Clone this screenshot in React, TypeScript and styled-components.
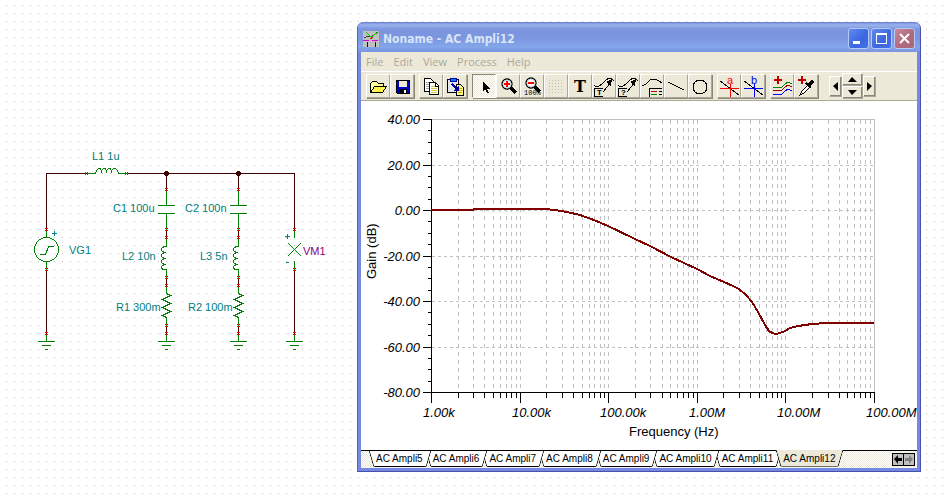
import React from "react";
import styled, { createGlobalStyle, css } from "styled-components";

const FACE = "#ece9d8";
const SHADOW = "#aca899";
const WIRE = "#400000";
const PART = "#008000";
const LABEL = "#008080";

const GlobalStyle = createGlobalStyle`
  * { box-sizing: border-box; }
  html { height: 100%; }
  body { margin: 0; min-height: 100%; font-family: "Liberation Sans", Arial, sans-serif; font-size: 11px; }
  button { margin: 0; padding: 0; border: 0; background: none; font: inherit; color: inherit; }
`;

const Page = styled.main`
  min-height: 100vh;
  display: flex;
  align-items: flex-start;
  padding: 22px 27px 26px 0;
  background-image: linear-gradient(to right, transparent 1px, #fff 1px),
    linear-gradient(to bottom, #c0c0c0 1px, #fff 1px);
  background-size: 8px 8px;
  background-position: 6px 5px;
`;

const Schematic = styled.figure`
  flex: none;
  width: 357px;
  margin: 0;
  padding-top: 120px;
`;

const Drawing = styled.svg`
  display: block;
  width: 100%;
  height: auto;
  text { font-family: "Liberation Sans", Arial, sans-serif; }
`;

const Window = styled.section`
  flex: 1;
  min-width: 0;
  padding: 0 4px 4px;
  border-radius: 7px 7px 0 0;
  background: #758adf;
  box-shadow: inset 1px 0 #5a60c4, inset -1px -1px #4a4fb5, inset 0 1px #5f73c8;
`;

const TitleBar = styled.header`
  display: flex;
  align-items: center;
  gap: 4px;
  height: 30px;
  margin: 0 -3px;
  padding: 3px 5px 0;
  border-radius: 6px 6px 0 0;
  background: linear-gradient(#6a80d0 0, #9bb4ee 3px, #7b96df 7px, #7b96df 16px, #84a6ea 25px, #7a94dd 30px);
`;

const Title = styled.h1`
  flex: 1;
  margin: 0;
  color: #d8e4f8;
  font: bold 12px/18px "DejaVu Sans Condensed", "Noto Sans", sans-serif;
`;

const CaptionGroup = styled.div`
  display: flex;
  gap: 2px;
`;

const Caption = styled.button<{ $close?: boolean }>`
  width: 21px;
  height: 21px;
  border: 1px solid #b6c8f4;
  border-radius: 3px;
  background: ${(p) =>
    p.$close
      ? "linear-gradient(135deg, #c68a9c, #b0697c 60%, #a9687c)"
      : "linear-gradient(135deg, #5f8af0, #3a66e0 60%, #4573e6)"};
  svg { display: block; width: 19px; height: 19px; }
`;

const MenuBar = styled.nav`
  display: flex;
  gap: 10px;
  height: 19px;
  padding: 0 5px;
  background: ${FACE};
  color: ${SHADOW};
  font: 11px/18px "Open Sans", "Noto Sans", sans-serif;
`;

const ToolBar = styled.div`
  display: flex;
  align-items: center;
  gap: 5px;
  height: 30px;
  padding: 0 5px;
  border-top: 1px solid #fff;
  border-bottom: 1px solid ${SHADOW};
  background: ${FACE};
`;

const ToolGroup = styled.div`
  display: flex;
  box-shadow: 1px 1px #8b887a;
`;

const raised = css`
  border: 1px solid;
  border-color: #fff ${SHADOW} ${SHADOW} #fff;
  background: ${FACE};
`;

const Tool = styled.button<{ $pressed?: boolean }>`
  ${raised}
  width: 24px;
  height: 24px;
  ${(p) =>
    p.$pressed &&
    css`
      border-color: #8b887a #fff #fff #8b887a;
      background: repeating-conic-gradient(#fff 0 25%, ${FACE} 0 50%) 0 0 / 2px 2px;
    `}
  svg { display: block; width: 22px; height: 22px; overflow: visible; }
`;

const Spinner = styled.div`
  display: grid;
  grid-template: "left up right" 13px "left down right" 13px / 13px 21px 13px;
  align-items: center;
  margin-left: 6px;
`;

const Arrow = styled.button<{ $area: "left" | "right" | "up" | "down" }>`
  ${raised}
  grid-area: ${(p) => p.$area};
  display: grid;
  place-items: center;
  height: ${(p) => (p.$area === "left" || p.$area === "right" ? "21px" : "13px")};
  box-shadow: inset -1px -1px #8b887a;
`;

const Plot = styled(Drawing)`
  background: #fff;
`;

const TabStrip = styled.footer`
  display: flex;
  height: 18px;
  padding: 0 2px 0 8px;
  border-top: 1px solid #000;
  background: repeating-conic-gradient(#fff 0 25%, ${FACE} 0 50%) 0 0 / 2px 2px;
`;

const Tabs = styled.div`
  flex: 1;
  display: flex;
  isolation: isolate;
`;

const Tab = styled.button<{ $active?: boolean; $order: number }>`
  position: relative;
  z-index: ${(p) => (p.$active ? 20 : p.$order)};
  height: 16px;
  padding: 0 8px 0 7px;
  margin-right: -5px;
  font-size: 10px;
  line-height: 16px;
  white-space: nowrap;
  &::before,
  &::after {
    content: "";
    position: absolute;
    z-index: -1;
    top: ${(p) => (p.$active ? "-1px" : "0")};
    bottom: 0;
    background: ${(p) => (p.$active ? FACE : "#fff")};
    border-bottom: 1px solid ${(p) => (p.$active ? "#716f64" : "#000")};
  }
  &::before {
    left: 2px;
    right: 40%;
    border-left: 1px solid #000;
    border-bottom-left-radius: 2px;
    transform: skewX(16deg);
  }
  &::after {
    left: 40%;
    right: 2px;
    border-right: 1px solid #000;
    border-bottom-right-radius: 2px;
    transform: skewX(-16deg);
  }
`;

const Nudge = styled.button`
  width: 12px;
  height: 13px;
  margin-top: 2px;
  border: 1px solid #000;
  background: #c0c0c0;
  & + & { margin-left: -1px; }
  svg { display: block; width: 10px; height: 11px; }
`;

/* ---------- circuit ---------- */

const Pin = ({ x, y, flat }: { x: number; y: number; flat?: boolean }) =>
  flat ? (
    <path fill="#f00" d={`M${x - 1} ${y - 1}h1v3h-1zM${x + 1} ${y - 1}h1v3h-1z`} />
  ) : (
    <path fill="#f00" d={`M${x - 1} ${y - 1}h3v1h-3zM${x - 1} ${y + 1}h3v1h-3z`} />
  );

const Line = ({ d, c = PART }: { d: string; c?: string }) => (
  <path d={d} fill="none" stroke={c} strokeLinecap="square" transform="translate(.5 .5)" />
);

const Ground = ({ x }: { x: number }) => (
  <Line d={`M${x} 334V341M${x - 8} 341h16M${x - 4} 345h8M${x - 1} 349h2`} />
);

const Branch = ({ x }: { x: number }) => (
  <g>
    <Line c={WIRE} d={`M${x} 173V189M${x} 229V238M${x} 277V286M${x} 325V334`} />
    <Line
      d={`M${x} 190V205M${x - 8} 205h16M${x - 8} 213h16M${x} 213V229M${x} 238V246
      h-2q-3 1-3 3q0 2 4 3h-1q-3 1-3 3q0 2 4 3h-1q-3 1-3 3q0 2 4 3h-1q-3 1-3 3q0 2 3 2h2V277
      M${x} 286V293l4 2l-8 4l8 4l-8 4l8 4l-8 4l4 2V325`}
    />
    <Ground x={x} />
    {[189, 229, 237, 277, 285, 325, 333].map((y) => (
      <Pin key={y} x={x} y={y} />
    ))}
    <circle cx={x + 0.5} cy={173.5} r={2.6} fill={WIRE} />
  </g>
);

const labels: [string, number, number, string?][] = [
  ["L1 1u", 92, 160],
  ["C1 100u", 113, 212],
  ["L2 10n", 122, 260],
  ["R1 300m", 116, 311],
  ["C2 100n", 185, 212],
  ["L3 5n", 200, 260],
  ["R2 100m", 188, 311],
  ["VG1", 69, 254],
  ["VM1", 303, 255, "#800080"],
];

const Circuit = () => (
  <Drawing viewBox="0 142 357 212" role="img" aria-label="Circuit schematic" shapeRendering="crispEdges">
    <Line c={WIRE} d="M46 230V173H87M127 173H294V229M46 269V333M294 270V333" />
    <Line d="M88 173H95l1-3q1-2 3-2q2 0 2 4q0-4 3-4q2 0 2 4q0-4 3-4q2 0 2 4q0-4 3-4q2 0 3 2l1 3H126" />
    <Line d="M46 230V237M46 261V269M40 254H45L48 246H53" />
    <circle cx={46.5} cy={249.5} r={12} fill="none" stroke={PART} />
    <Line c={LABEL} d="M52 233h4M54 231v4M285 236h4M287 234v4M286 262h2" />
    <Line d="M294 230V237M288 243l12 12M300 243l-12 12M294 261V269" />
    <Branch x={166} />
    <Branch x={238} />
    <Ground x={46} />
    <Ground x={294} />
    <Pin x={86} y={173} flat />
    <Pin x={126} y={173} flat />
    {[46, 294].map((x) => [229, 269, 333].map((y) => <Pin key={`${x}-${y}`} x={x} y={y} />))}
    {labels.map(([t, x, y, c]) => (
      <text key={t} x={x} y={y} fontSize={11} fill={c ?? LABEL}>{t}</text>
    ))}
  </Drawing>
);

/* ---------- gain plot ---------- */

const X0 = 70, X1 = 513, Y0 = 18, Y1 = 291;
const xAt = (decade: number, mult = 1) => Math.round(X0 + ((X1 - X0) / 5) * (decade + Math.log10(mult)));
const yAt = (db: number) => Math.round(Y0 + ((40 - db) / 120) * (Y1 - Y0));
const minors: number[] = [0, 1, 2, 3, 4].flatMap((d) => [2, 3, 4, 5, 6, 7, 8, 9].map((m) => xAt(d, m)));
const majors = [0, 1, 2, 3, 4, 5].map((d) => xAt(d));
const dbs = [40, 20, 0, -20, -40, -60, -80];
const freqs = ["1.00k", "10.00k", "100.00k", "1.00M", "10.00M", "100.00M"];
const trace =
  "70,109 112,109 113,108 184,108 194,109 206,111 219,114 233,119 247,125 274,138 289,145 310,156 336,168 349,175 363,181 372,185 378,188 385,194 391,201 397,211 404,224 408,230 411,232 415,233 419,232 424,230 429,227 437,225 451,223 465,222 513,222";

const GainPlot = () => (
  <Plot viewBox="0 0 556 349" role="img" aria-label="Gain in dB against frequency" shapeRendering="crispEdges">
    <g transform="translate(.5 .5)" fill="none">
      <g stroke="#c0c0c0">
        <path
          strokeDasharray="4 4"
          d={[...minors, ...majors.slice(1, 5)].map((x) => `M${x} ${Y0}V${Y1}`).join("")}
        />
        <path strokeDasharray="3 3" d={dbs.slice(1, 6).map((v) => `M${X0} ${yAt(v)}H${X1}`).join("")} />
        <path d={`M${X0} ${Y0}H${X1}V${Y1}`} />
      </g>
      <path
        stroke="#000"
        d={
          `M${X0} ${Y0}V${Y1}H${X1}` +
          dbs.map((v) => `M${X0 - 9} ${yAt(v)}h9`).join("") +
          dbs.slice(0, 6).map((v) => [5, 10, 15].map((s) => `M${X0 - 4} ${yAt(v - s)}h4`).join("")).join("") +
          minors.map((x) => `M${x} ${Y1}v5`).join("") +
          majors.map((x) => `M${x} ${Y1}v10`).join("")
        }
      />
    </g>
    <polyline points={trace} fill="none" stroke="#800000" strokeWidth={2} />
    <g fontSize={13} fill="#000">
      <g fontStyle="italic">
        {dbs.map((v) => (
          <text key={v} x={59} y={yAt(v) + 5} textAnchor="end">{v.toFixed(2)}</text>
        ))}
        {freqs.map((f, i) => (
          <text key={f} x={majors[i] - 8} y={316}>{f}</text>
        ))}
      </g>
      <text x={268} y={335}>Frequency (Hz)</text>
      <text transform="translate(15 178) rotate(-90)">Gain (dB)</text>
    </g>
  </Plot>
);

/* ---------- icons ---------- */

const Icon = ({ children }: { children?: React.ReactNode }) => (
  <svg viewBox="0 0 22 22" shapeRendering="crispEdges" fill="none" stroke="#000" aria-hidden="true">{children}</svg>
);

const lens = (cx: number, cy: number) => (
  <>
    <path d={`M${cx + 4} ${cy + 4}L${cx + 9} ${cy + 9}`} strokeWidth={3} />
    <circle cx={cx} cy={cy} r={5} fill="#fff" shapeRendering="auto" strokeWidth={1.3} />
    <circle cx={cx} cy={cy} r={4} stroke="#b8d0d8" shapeRendering="auto" />
  </>
);

const tinyText = { fill: "#000", stroke: "none", fontFamily: "Liberation Mono, monospace" };

const Note = ({ t }: { t: string }) => (
  <>
    <path d="M1 10q2 3 5 1q3-2 5-4t5-4q3 0 5 3" />
    <path d="M10 17L18 7" />
    <path d="M19 4l-1 7l-5-4z" fill="#000" stroke="none" />
    <path d="M1 13.500h9M1 21.500h9M1.500 13v8" />
    <text x={4} y={20} fontSize={8} fontWeight="bold" {...tinyText}>{t}</text>
  </>
);

const Cursor = ({ t, c }: { t: string; c: string }) => (
  <>
    <path d="M2 6L21 20" />
    <path d="M2 13h19v1H2zM12 9h1v13h-1z" fill={c} stroke="none" />
    <text x={9} y={9} fontSize={11} fill={c} stroke="none">{t}</text>
  </>
);

const Plus = () => <path d="M6 1h2v3h3v2H8v3H6V6H3V4h3z" fill="#c00000" stroke="none" />;

type ToolItem = { name: string; icon: React.ReactNode; pressed?: boolean };

const groups: ToolItem[][] = [
  [
    {
      name: "Open",
      icon: (
        <>
          <path d="M3.500 16.500v-8l2-2h4l2 2h5v3" fill="#ffff99" />
          <path d="M3.500 17.500l4-6h12l-4 6z" fill="#fff34d" />
        </>
      ),
    },
    {
      name: "Save",
      icon: (
        <>
          <path d="M5.500 5.500h13v13h-12l-1-1z" fill="#0000c8" />
          <path d="M8 6h8v6H8z" fill="#ece9d8" stroke="none" />
          <path d="M8 14h8v5H8z" fill="#000" stroke="none" />
          <path d="M13 15h2v3h-2z" fill="#fff" stroke="none" />
        </>
      ),
    },
  ],
  [
    {
      name: "Copy",
      icon: (
        <>
          <path d="M4.500 3.500h6l3 3v10h-9z" fill="#fff" />
          <path d="M6 7.500h4M6 9.500h5M6 11.500h5M6 13.500h5" stroke="#a0a0a0" />
          <path d="M9.500 7.500h6l3 3v9h-9z" fill="#fff" />
          <path d="M11 11.500h4M11 13.500h6M11 15.500h6M11 17.500h6" stroke="#d8c840" />
          <path d="M15.500 8v3h3" />
        </>
      ),
    },
    {
      name: "Paste",
      icon: (
        <>
          <path d="M3.500 4.500h11v13h-11z" fill="#e4e8ee" />
          <path d="M6 3h6v3H6z" fill="#0080ff" stroke="#0000a0" />
          <path d="M12.500 9.500h4l3 3v8h-7z" fill="#fff68a" />
          <path d="M14 13.500h4M14 15.500h4M14 17.500h4" stroke="#c8a800" />
          <path d="M8 9l5 5" stroke="#0000a0" strokeWidth={2} />
          <path d="M15 16v-6l-6 6z" fill="#0000a0" stroke="none" />
        </>
      ),
    },
  ],
  [
    {
      name: "Select",
      pressed: true,
      icon: <path d="M10 6v10l2-2l2 4h2l-2-4h3z" fill="#000" stroke="none" />,
    },
    {
      name: "Zoom in",
      icon: (
        <>
          {lens(10, 9)}
          <path d="M7 8h6v2H7zM9 6h2v6H9z" fill="#f00" stroke="none" />
        </>
      ),
    },
    {
      name: "Zoom 100%",
      icon: (
        <>
          {lens(10, 8)}
          <path d="M7 7h6v2H7z" fill="#f00" stroke="none" />
          <text x={3} y={20} fontSize={7} {...tinyText}>100%</text>
        </>
      ),
    },
    {
      name: "Grid",
      icon: (
        <path
          d="M4 5.500h15M4 8.500h15M4 11.500h15M4 14.500h15M4 17.500h15"
          stroke="#c4c0b0"
          strokeDasharray="1 2"
        />
      ),
    },
    {
      name: "Text",
      icon: (
        <text x={5} y={17} fontSize={16} fontWeight="bold" fill="#000" stroke="none" fontFamily="DejaVu Serif, serif">
          T
        </text>
      ),
    },
    { name: "Text label", icon: <Note t="T" /> },
    { name: "Query label", icon: <Note t="?" /> },
    {
      name: "Legend",
      icon: (
        <>
          <path d="M1 11q4-1 6-4t6-3q4 1 8 4" />
          <path d="M8 13.500h13M8.500 14v8" />
          <path d="M10 16h6v1h-6z" fill="#c00000" stroke="none" />
          <path d="M10 19h6v1h-6z" fill="#008000" stroke="none" />
          <path d="M18 16.500h3M18 19.500h3" />
        </>
      ),
    },
    { name: "Line", icon: <path d="M3 7L19 15" /> },
    { name: "Circle", icon: <circle cx={11} cy={12} r={7} /> },
  ],
  [
    { name: "Cursor a", icon: <Cursor t="a" c="#f00" /> },
    { name: "Cursor b", icon: <Cursor t="b" c="#00f" /> },
  ],
  [
    {
      name: "Add curves",
      icon: (
        <>
          <path d="M2 13q3-2 6 0q3 0 6-4q3-3 7 0" stroke="#008000" />
          <path d="M2 16q3-2 6 0q3 0 6-4q3-3 7 0" stroke="#a00000" />
          <path d="M2 20q3-2 6 0q3 0 6-4q3-3 7 0" stroke="#0000ff" />
          <Plus />
        </>
      ),
    },
    {
      name: "Pick curve",
      icon: (
        <>
          <path d="M5 20l2-4l6-6l2 2l-6 6z" fill="#fff" />
          <path d="M11 8l5 5" strokeWidth={2} />
          <path d="M14 10l4-4" strokeWidth={4} />
          <Plus />
        </>
      ),
    },
  ],
];

const Tri = ({ d }: { d: string }) => (
  <svg width="9" height="9" viewBox="0 0 9 9" aria-hidden="true"><path d={d} /></svg>
);

const AppIcon = () => (
  <svg width="16" height="16" viewBox="0 0 16 16" shapeRendering="crispEdges" fill="none" aria-hidden="true">
    <path d="M0 0h16v16H0z" fill="#c0c0c0" />
    <path d="M1 7L5 5L8 6L15 1" stroke="#404040" />
    <path d="M3 1l4 4l2 1l5-5" stroke="#00d000" />
    <path d="M0 9h6v1H0zM9 9h6v1H9z" fill="#e000e0" />
    <path d="M7 8l3-2" stroke="#f00" />
    <path d="M4 11h1v5H4zM12 11h1v5h-1z" fill="#0000c8" />
  </svg>
);

const tabNames = [5, 6, 7, 8, 9, 10, 11, 12].map((n) => `AC Ampli${n}`);

export default function App() {
  return (
    <>
      <GlobalStyle />
      <Page>
        <Schematic>
          <Circuit />
        </Schematic>
        <Window>
          <TitleBar>
            <AppIcon />
            <Title>Noname - AC Ampli12</Title>
            <CaptionGroup>
              <Caption aria-label="Minimize">
                <svg viewBox="0 0 19 19"><path d="M4 12h7v3H4z" fill="#fff" /></svg>
              </Caption>
              <Caption aria-label="Maximize">
                <svg viewBox="0 0 19 19" shapeRendering="crispEdges">
                  <path fillRule="evenodd" d="M4 4h11v11H4zM5 6v8h9V6z" fill="#fff" />
                </svg>
              </Caption>
              <Caption $close aria-label="Close">
                <svg viewBox="0 0 19 19"><path d="M5 5l9 9M14 5l-9 9" stroke="#fff" strokeWidth={2} /></svg>
              </Caption>
            </CaptionGroup>
          </TitleBar>
          <MenuBar aria-label="Main menu">
            {["File", "Edit", "View", "Process", "Help"].map((m) => (
              <button key={m}>{m}</button>
            ))}
          </MenuBar>
          <ToolBar role="toolbar" aria-label="Diagram tools">
            {groups.map((g) => (
              <ToolGroup key={g[0].name}>
                {g.map((t) => (
                  <Tool key={t.name} aria-label={t.name} $pressed={t.pressed} aria-pressed={t.pressed}>
                    <Icon>{t.icon}</Icon>
                  </Tool>
                ))}
              </ToolGroup>
            ))}
            <Spinner>
              <Arrow $area="left" aria-label="Left"><Tri d="M7 0v9L2 4z" /></Arrow>
              <Arrow $area="up" aria-label="Up"><Tri d="M0 7h9L4 2z" /></Arrow>
              <Arrow $area="down" aria-label="Down"><Tri d="M0 2h9L4 7z" /></Arrow>
              <Arrow $area="right" aria-label="Right"><Tri d="M2 0v9l5-5z" /></Arrow>
            </Spinner>
          </ToolBar>
          <GainPlot />
          <TabStrip>
            <Tabs role="tablist">
              {tabNames.map((n, i) => {
                const active = i === tabNames.length - 1;
                return (
                  <Tab key={n} role="tab" aria-selected={active} $active={active} $order={tabNames.length - i}>
                    {n}
                  </Tab>
                );
              })}
            </Tabs>
            <Nudge aria-label="Scroll tabs left">
              <svg viewBox="0 0 10 11"><path d="M1 5l4-4v3h4v3H5v3z" /></svg>
            </Nudge>
            <Nudge aria-label="Scroll tabs right">
              <svg viewBox="0 0 10 11"><path d="M9 5L5 1v3H1v3h4v3z" fill="#808080" /></svg>
            </Nudge>
          </TabStrip>
        </Window>
      </Page>
    </>
  );
}
